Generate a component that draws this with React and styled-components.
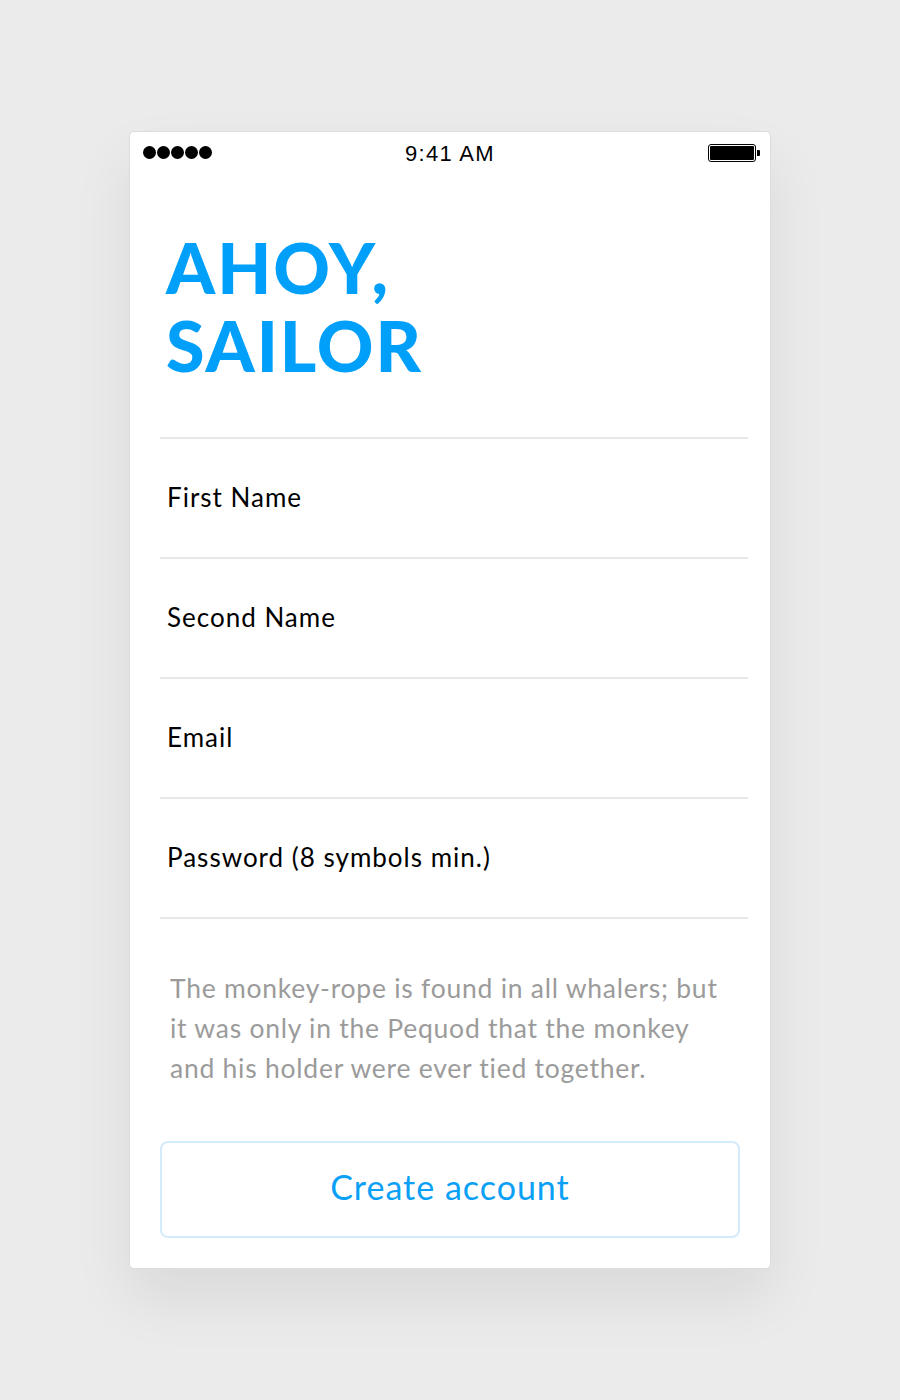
import React from "react";
import styled, { createGlobalStyle } from "styled-components";

const Global = createGlobalStyle`
  html, body { margin: 0; padding: 0; background: #ebebeb; }
  body { font-family: "Lato", "Noto Sans", sans-serif; }
`;

const Page = styled.div`
  width: 900px;
  height: 1400px;
  padding-top: 131px;
  box-sizing: border-box;
`;

const Phone = styled.div`
  margin-left: 129px;
  width: 642px;
  height: 1138px;
  box-sizing: border-box;
  background: #fff;
  border: 1px solid #dcdcdc;
  border-radius: 5px;
  box-shadow: 0 30px 60px rgba(0, 0, 0, 0.08);
  display: flex;
  flex-direction: column;
`;

const StatusBar = styled.div`
  height: 44px;
  display: flex;
  align-items: center;
  justify-content: space-between;
  padding: 0 10px 4px 13px;
  box-sizing: border-box;
  position: relative;
`;

const Signal = styled.div`
  display: flex;
  gap: 1px;
`;

const Dot = styled.span`
  width: 13px;
  height: 13px;
  border-radius: 50%;
  background: #000;
`;

const Time = styled.div`
  position: absolute;
  left: 0;
  right: 0;
  text-align: center;
  font-family: "Liberation Sans", Arial, sans-serif;
  font-size: 22px;
  letter-spacing: 1.3px;
  color: #000;
  top: 9px;
`;

const Battery = styled.div`
  display: flex;
  align-items: center;
  margin-top: 2px;
`;

const BatteryBody = styled.div`
  width: 44px;
  height: 14px;
  border: 1px solid #000;
  border-radius: 3px;
  padding: 1px;
  box-sizing: content-box;
  display: flex;
`;

const BatteryFill = styled.div`
  flex: 1;
  background: #000;
  border-radius: 1px;
`;

const BatteryTip = styled.div`
  width: 3px;
  height: 6px;
  background: #000;
  margin-left: 1px;
  border-radius: 0 1px 1px 0;
`;

const Content = styled.div`
  padding: 0 22px 0 30px;
  display: flex;
  flex-direction: column;
`;

const Title = styled.h1`
  margin: 52px 0 0 6px;
  font-family: "Lato", sans-serif;
  font-weight: 900;
  font-size: 70px;
  line-height: 78px;
  color: #009ffa;
  letter-spacing: 2px;
  height: 209px;
`;

const Form = styled.div`
  display: flex;
  flex-direction: column;
  border-top: 2px solid #e8e8e8;
`;

const Row = styled.div`
  height: 118px;
  border-bottom: 2px solid #e8e8e8;
  display: flex;
  align-items: center;
  padding: 0 0 3px 7px;
  box-sizing: border-box;
  height: 120px;
  font-size: 26px;
  letter-spacing: 1px;
  color: #000;
  font-family: "Lato", sans-serif;
`;

const Note = styled.p`
  margin: 49px 0 0 10px;
  font-size: 26.5px;
  line-height: 40px;
  letter-spacing: 0.75px;
  color: #9b9b9b;
  white-space: nowrap;
`;

const Button = styled.button`
  margin: 53px 8px 0 0;
  height: 97px;
  padding: 0 0 6px;
  border: 2px solid #d4ebfc;
  border-radius: 8px;
  background: #fff;
  color: #0aa0f6;
  font-family: "Lato", sans-serif;
  font-size: 34px;
  letter-spacing: 1px;
  cursor: pointer;
`;

const noteLines = [
  "The monkey-rope is found in all whalers; but",
  "it was only in the Pequod that the monkey",
  "and his holder were ever tied together.",
];

export default function App() {
  const fields = ["First Name", "Second Name", "Email", "Password (8 symbols min.)"];
  return (
    <>
      <Global />
      <Page>
        <Phone>
          <StatusBar>
            <Signal>
              {[0, 1, 2, 3, 4].map((i) => (
                <Dot key={i} />
              ))}
            </Signal>
            <Time>9:41 AM</Time>
            <Battery>
              <BatteryBody>
                <BatteryFill />
              </BatteryBody>
              <BatteryTip />
            </Battery>
          </StatusBar>
          <Content>
            <Title>
              AHOY,
              <br />
              SAILOR
            </Title>
            <Form>
              {fields.map((f) => (
                <Row key={f}>{f}</Row>
              ))}
            </Form>
            <Note>
              {noteLines.map((l, i) => (
                <React.Fragment key={i}>
                  {l}
                  {i < noteLines.length - 1 && <br />}
                </React.Fragment>
              ))}
            </Note>
            <Button>Create account</Button>
          </Content>
        </Phone>
      </Page>
    </>
  );
}
